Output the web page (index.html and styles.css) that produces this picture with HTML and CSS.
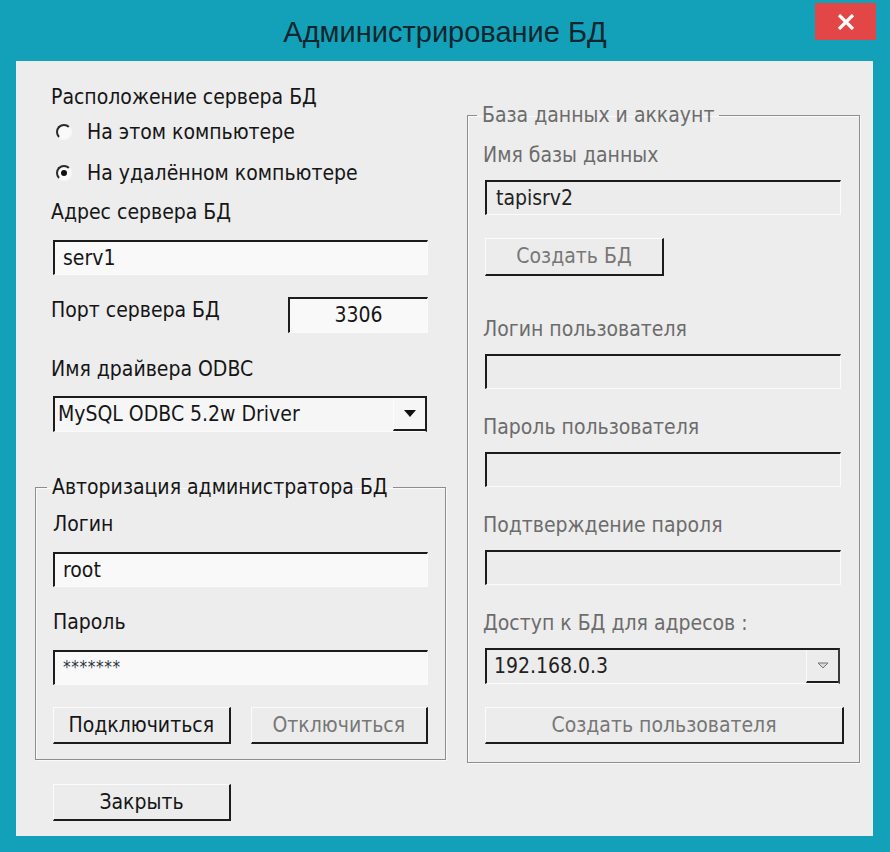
FILE: index.html
```html
<!DOCTYPE html>
<html lang="ru">
<head>
    <meta charset="UTF-8">
    <title>Администрирование БД</title>
    <link rel="stylesheet" href="styles.css">
</head>
<body>
    <div class="window">
        <div class="titlebar">
            <span class="title">Администрирование БД</span>
            <div class="close">
                <svg width="18" height="16" viewBox="0 0 18 16">
                    <path d="M2 1 L16 15 M16 1 L2 15" stroke="#fff" stroke-width="3.2" fill="none"/>
                </svg>
            </div>
        </div>

        <div class="client">
            <div class="col-left">
                <div class="server">
                    <div class="label">Расположение сервера БД</div>
                    <div class="radio r-first"><span class="circle"></span>На этом компьютере</div>
                    <div class="radio r-second"><span class="circle checked"></span>На удалённом компьютере</div>
                    <div class="label addr">Адрес сервера БД</div>
                    <div class="edit">serv1</div>
                    <div class="port-row">
                        <div class="label">Порт сервера БД</div>
                        <div class="edit port">3306</div>
                    </div>
                    <div class="label odbc">Имя драйвера ODBC</div>
                    <div class="combo">
                        <span>MySQL ODBC 5.2w Driver</span>
                        <span class="drop"><span class="arrow"></span></span>
                    </div>
                </div>

                <fieldset class="group auth">
                    <legend>Авторизация администратора БД</legend>
                    <div class="label">Логин</div>
                    <div class="edit">root</div>
                    <div class="label after-edit">Пароль</div>
                    <div class="edit secret">*******</div>
                    <div class="btn-row">
                        <div class="btn">Подключиться</div>
                        <div class="btn disabled">Отключиться</div>
                    </div>
                </fieldset>

                <div class="btn exit">Закрыть</div>
            </div>

            <fieldset class="group db">
                <legend>База данных и аккаунт</legend>
                <div class="label">Имя базы данных</div>
                <div class="edit">tapisrv2</div>
                <div class="btn disabled create-db">Создать БД</div>

                <div class="label user">Логин пользователя</div>
                <div class="edit"></div>
                <div class="label after-edit">Пароль пользователя</div>
                <div class="edit"></div>
                <div class="label after-edit">Подтверждение пароля</div>
                <div class="edit"></div>
                <div class="label after-edit">Доступ к БД для адресов :</div>
                <div class="combo">
                    <span>192.168.0.3</span>
                    <span class="drop">
                        <svg width="12" height="8" viewBox="0 0 12 8">
                            <path d="M1 1 L11 1 L6 6 Z" fill="#d8d8d8" stroke="#777" stroke-width="1"/>
                        </svg>
                    </span>
                </div>
                <div class="btn disabled create-user">Создать пользователя</div>
            </fieldset>
        </div>
    </div>
</body>
</html>
```

FILE: styles.css
```css
* {
    box-sizing: border-box;
}
body {
    margin: 0;
    background: #13a1b9;
    font-family: "DejaVu Sans Condensed", "DejaVu Sans", sans-serif;
    font-size: 21px;
    color: #161616;
}
.window {
    width: 890px;
    height: 852px;
}

/* title bar */
.titlebar {
    height: 61px;
    position: relative;
    display: flex;
    justify-content: center;
}
.title {
    font-family: "Liberation Sans", Arial, sans-serif;
    font-size: 29px;
    line-height: 34px;
    padding-top: 15px;
    color: #10262e;
}
.close {
    position: absolute;
    top: 3px;
    right: 14px;
    width: 61px;
    height: 37px;
    background: #e34646;
    display: flex;
    align-items: center;
    justify-content: center;
}

/* dialog body */
.client {
    margin: 0 17px 0 16px;
    height: 775px;
    background: #ededed;
    padding-left: 19px;
    display: grid;
    grid-template-columns: 411px 393px;
    column-gap: 21px;
    align-items: start;
}
.col-left {
    padding-top: 21px;
}
.server {
    padding-left: 16px;
}

.label {
    line-height: 30px;
    white-space: nowrap;
}
.label.addr {
    margin-top: 9px;
}
.label.odbc {
    margin-top: 21px;
}
.label.after-edit {
    margin-top: 20px;
}

.radio {
    display: flex;
    align-items: center;
    height: 30px;
}
.radio.r-first {
    margin-top: 5px;
}
.radio.r-second {
    margin-top: 11px;
}
.circle {
    width: 16px;
    height: 16px;
    margin: 0 15px 0 5px;
    border-radius: 50%;
    border: 2px solid;
    border-color: #2a2a2a #f8f8f8 #f8f8f8 #2a2a2a;
    background: #fafafa;
    display: flex;
    align-items: center;
    justify-content: center;
}
.circle.checked::after {
    content: "";
    width: 6px;
    height: 6px;
    border-radius: 50%;
    background: #111;
}

/* edit boxes */
.edit {
    height: 35px;
    width: 375px;
    margin-top: 13px;
    padding-left: 8px;
    line-height: 32px;
    background: #f9f9f9;
    border-top: 2px solid #1c1c1c;
    border-left: 2px solid #1c1c1c;
    border-right: 1px solid #fbfbfb;
    border-bottom: 1px solid #fbfbfb;
    white-space: nowrap;
}
.server .edit {
    margin-left: 2px;
}
.port-row {
    display: flex;
    justify-content: space-between;
    align-items: flex-start;
    width: 377px;
    margin-top: 22px;
}
.port-row .label {
    line-height: 26px;
}
.edit.port {
    width: 140px;
    height: 36px;
    margin: 0;
    padding: 0;
    text-align: center;
}
.edit.secret {
    font-size: 17px;
    letter-spacing: 0.6px;
    line-height: 30px;
    color: #2e3440;
}

/* combo boxes */
.combo {
    display: flex;
    justify-content: space-between;
    width: 374px;
    height: 36px;
    margin: 12px 0 0 2px;
    padding-left: 3px;
    line-height: 32px;
    background: #f6f6f6;
    border-top: 2px solid #1c1c1c;
    border-left: 2px solid #1c1c1c;
    border-right: 2px solid #1c1c1c;
    border-bottom: 1px solid #fbfbfb;
}
.drop {
    width: 32px;
    border-left: 1px solid #fbfbfb;
    border-bottom: 2px solid #1c1c1c;
    display: flex;
    align-items: center;
    justify-content: center;
}
.arrow {
    width: 0;
    height: 0;
    border-left: 6px solid transparent;
    border-right: 6px solid transparent;
    border-top: 7px solid #111;
}

/* buttons */
.btn {
    width: 178px;
    height: 37px;
    line-height: 34px;
    text-align: center;
    background: #ececec;
    border-top: 1px solid #fbfbfb;
    border-left: 1px solid #fbfbfb;
    border-right: 2px solid #1c1c1c;
    border-bottom: 2px solid #1c1c1c;
    white-space: nowrap;
}
.btn.disabled {
    color: #777;
}
.btn-row {
    display: flex;
    gap: 20px;
    margin-top: 22px;
}
.btn.exit {
    margin: 24px 0 0 18px;
}

/* group boxes */
.group {
    margin: 0;
    border: 1px solid #8e8e8e;
    box-shadow: 1px 1px 0 #fafafa, inset 1px 1px 0 #fafafa;
    min-width: 0;
}
.group legend {
    line-height: 30px;
    padding: 0 5px;
    margin-left: -6px;
    white-space: nowrap;
}
.auth {
    width: 411px;
    margin-top: 40px;
    padding: 7px 17px 15px 17px;
}

.db {
    width: 393px;
    margin-top: 39px;
    padding: 10px 15px 18px 17px;
    color: #6c6c6c;
}
.db legend {
    margin-left: -8px;
}
.db .label {
    margin-left: -2px;
}
.db .edit {
    width: 356px;
    margin-top: 10px;
    padding-left: 9px;
    background: #ececec;
    color: #222;
}
.db .label.after-edit {
    margin-top: 23px;
}
.db .label.user {
    margin-top: 38px;
}
.db .combo {
    width: 355px;
    margin: 10px 0 0 0;
    padding-left: 7px;
    background: #ececec;
    color: #222;
    border-right: 2px solid #3a3a3a;
}
.btn.create-db {
    width: 179px;
    height: 38px;
    margin-top: 23px;
}
.btn.create-user {
    width: 359px;
    margin-top: 23px;
}
```
